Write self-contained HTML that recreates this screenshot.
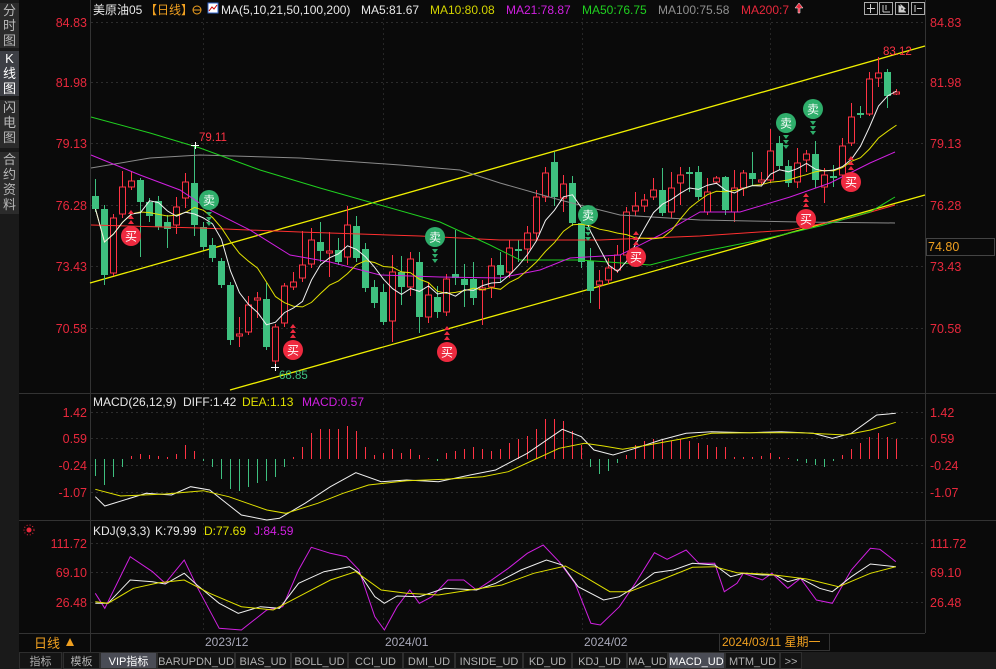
<!DOCTYPE html>
<html><head><meta charset="utf-8">
<style>
html,body{margin:0;padding:0;background:#0a0a0a;width:996px;height:669px;overflow:hidden;font-family:"Liberation Sans","Noto Sans CJK SC",sans-serif;}
#side{position:absolute;left:0;top:0;width:19px;height:669px;background:#1a1a1a;}
.sb{position:absolute;left:0;width:19px;background:#2b2b2b;color:#b8b8b8;font-size:13px;line-height:15px;text-align:center;}
.sb.on{background:#3d3f45;color:#fff;}
svg{position:absolute;left:0;top:0;}
</style></head><body>
<div id="side">
<div class="sb" style="top:3px;height:45px">分<br>时<br>图</div>
<div class="sb on" style="top:51px;height:45px">K<br>线<br>图</div>
<div class="sb" style="top:100px;height:48px">闪<br>电<br>图</div>
<div class="sb" style="top:152px;height:62px">合<br>约<br>资<br>料</div>
</div>
<svg id="s" width="996" height="669" xmlns="http://www.w3.org/2000/svg" font-family="Liberation Sans, Noto Sans CJK SC, sans-serif"></svg>
<script>
var S=document.getElementById('s'),h='';
function L(x1,y1,x2,y2,c,w,d){h+='<line x1="'+x1+'" y1="'+y1+'" x2="'+x2+'" y2="'+y2+'" stroke="'+c+'" stroke-width="'+(w||1)+'"'+(d?' stroke-dasharray="'+d+'"':'')+'/>';}
function T(x,y,t,c,s,a){h+='<text x="'+x+'" y="'+y+'" fill="'+c+'" font-size="'+(s||12)+'"'+(a?' text-anchor="'+a+'"':'')+'>'+t+'</text>';}
function P(pts,c,w){h+='<polyline fill="none" stroke="'+c+'" stroke-width="'+(w||1)+'" points="'+pts.map(function(p){return p[0]+','+p[1]}).join(' ')+'"/>';}
// frame
L(90.5,0,90.5,633,'#333');L(925.5,0,925.5,633,'#333');
L(19,393.5,996,393.5,'#333');L(19,520.5,996,520.5,'#333');
// grid
[22,82,143,205,266,328].forEach(function(y){L(91,y+.5,925,y+.5,'#2c2c2c',1,'2,3');});
[412,438,465,492,543,572,602].forEach(function(y){L(91,y+.5,925,y+.5,'#2c2c2c',1,'2,3');});
[203,383,582,770].forEach(function(x){L(x+.5,18,x+.5,633,'#262626',1,'2,3');});
// axis labels
var pl=[['84.83',22],['81.98',82],['79.13',143],['76.28',205],['73.43',266],['70.58',328]];
pl.forEach(function(p){T(87,p[1]+5,p[0],'#e8283c',12.5,'end');T(930,p[1]+5,p[0],'#e8283c',12.5);});
[['1.42',412],['0.59',438],['-0.24',465],['-1.07',492]].forEach(function(p){T(87,p[1]+5,p[0],'#e8283c',12.5,'end');T(930,p[1]+5,p[0],'#e8283c',12.5);});
[['111.72',543],['69.10',572],['26.48',602]].forEach(function(p){T(87,p[1]+5,p[0],'#e8283c',12.5,'end');T(930,p[1]+5,p[0],'#e8283c',12.5);});
h+='<rect x="926.5" y="238.5" width="68" height="17" fill="#0a0a0a" stroke="#444"/>';
T(928,251,'74.80','#f0a020',12.5);
// header
T(93,14,'美原油05','#e8e8e8',12);T(145,14,'【日线】','#f0a020',12);
h+='<circle cx="197" cy="10" r="4" fill="none" stroke="#f0a020"/>';L(193,10,201,10,'#f0a020');
h+='<rect x="208" y="3" width="10" height="10" fill="#fff" stroke="#36c"/>';P([[209,11],[212,7],[214,9],[217,5]],'#c00');
T(221,14,'MA(5,10,21,50,100,200)','#e8e8e8',12);T(361,14,'MA5:81.67','#e8e8e8',12);
T(430,14,'MA10:80.08','#d4d400',12);T(506,14,'MA21:78.87','#d020e0',12);T(582,14,'MA50:76.75','#20d020',12);
T(658,14,'MA100:75.58','#909090',12);T(741,14,'MA200:7','#e8283c',12);
h+='<path d="M799 3 L795 8 L798 8 L798 13 L800 13 L800 8 L803 8 Z" fill="#e8283c" stroke="#fff" stroke-width=".5"/>';
[864,879,895,911].forEach(function(x){h+='<rect x="'+(x+.5)+'" y="2.5" width="13" height="12" fill="none" stroke="#aaa"/>';});
L(867,8.5,875,8.5,'#ccc');L(870.5,4,870.5,13,'#ccc');
L(883,5,883,12,'#ccc');L(883,12,890,12,'#ccc');L(886,5,886,10,'#ccc');
h+='<path d="M899 5 L899 12 L906 12 M901 5 L905 8.5 L901 11Z" fill="#ccc" stroke="#ccc"/>';
L(915,5,915,12,'#ccc');L(917,8.5,922,8.5,'#ccc');
// channel lines
L(90,283,925,46,'#f0f000',1.3);L(230,390,925,195,'#f0f000',1.3);
// candles [top,bottom,color(1 red,0 green),high,low]
var C=[[196,209,0,179,212],[209,275,0,205,285],[218,273,1,214,276],[187,214,1,171,218],[181,187,1,172,190],[180,202,0,178,257],[202,216,0,198,222],[201,227,0,196,230],[222,229,0,215,248],[207,225,1,197,234],[182,198,1,173,208],[183,225,0,145,236],[227,247,0,222,250],[245,258,0,238,262],[261,285,0,258,288],[285,340,0,282,345],[334,336,1,317,347],[305,332,1,296,335],[298,300,1,292,318],[299,347,0,283,350],[327,361,1,324,367],[286,323,1,283,327],[282,287,1,272,290],[265,278,1,231,282],[240,264,1,228,268],[242,251,0,222,262],[251,253,1,232,277],[250,262,0,238,265],[225,257,1,206,265],[226,258,0,216,262],[249,288,0,243,292],[287,303,0,280,308],[292,322,0,284,325],[272,321,1,255,342],[272,287,0,256,305],[259,287,1,252,296],[262,317,0,252,333],[295,317,1,282,323],[297,312,0,286,318],[279,312,1,274,316],[274,278,0,230,285],[279,285,0,264,307],[279,298,0,262,305],[288,290,1,280,325],[266,287,1,258,298],[265,275,0,252,282],[248,272,1,240,278],
[249,251,0,240,262],[233,249,1,226,263],[197,233,1,190,240],[173,197,1,167,202],[162,197,0,152,206],[184,198,1,175,212],[183,223,0,176,226],[223,262,0,218,268],[261,291,0,248,303],[281,285,1,270,309],[268,280,1,258,284],[255,270,1,245,273],[212,255,1,207,258],[206,211,1,192,216],[200,206,1,194,212],[190,197,1,178,200],[190,213,0,168,216],[188,212,1,172,218],[175,183,1,167,205],[172,174,0,167,192],[172,197,0,166,200],[192,212,1,178,215],[178,182,1,176,184],[177,210,0,176,215],[188,212,1,170,222],[173,188,1,170,196],[173,179,0,152,186],[180,182,1,172,185],[151,180,1,129,183],[143,166,0,136,170],[166,183,0,160,187],[163,182,1,148,188],[154,160,1,150,172],[154,180,0,141,188],[175,187,1,168,203],[176,178,0,165,187],[146,175,1,138,178],[117,143,1,103,146],[113,115,0,106,118],[79,114,1,72,116],[73,78,1,57,87],[72,96,0,69,108],[92,94,1,89,95]];
var cl=[];
C.forEach(function(c,i){var x=95+9*i,col=c[2]?'#ff3344':'#3ec07f';
 L(x+.5,c[3],x+.5,c[4],col);
 var bh=Math.max(c[1]-c[0],1.5);
 if(c[2])h+='<rect x="'+(x-2.5)+'" y="'+c[0]+'" width="6" height="'+bh+'" fill="#0a0a0a" stroke="'+col+'"/>';
 else h+='<rect x="'+(x-3)+'" y="'+c[0]+'" width="7" height="'+bh+'" fill="'+col+'"/>';
 cl.push(c[2]?c[0]:c[1]);});
function ma(n){var r=[];for(var i=0;i<cl.length;i++){var a=Math.max(0,i-n+1),s=0;for(var j=a;j<=i;j++)s+=cl[j];r.push([95+9*i+.5,(s/(i-a+1)).toFixed(1)]);}return r;}
// MA lines
P([[91,225],[200,228],[300,232],[420,236],[500,240],[600,240],[700,236],[790,230],[850,218],[895,205]],'#ff3030');
P([[91,168],[150,158],[200,155],[300,158],[400,165],[460,170],[500,183],[560,200],[620,215],[700,220],[800,222],[895,223]],'#8a8a8a');
P([[91,117],[150,133],[200,148],[260,170],[320,188],[380,205],[440,222],[490,245],[520,260],[580,260],[650,265],[700,252],[760,240],[820,226],[870,212],[895,197]],'#20d020');
P([[91,155],[140,175],[180,190],[210,210],[250,230],[290,255],[330,262],[380,275],[440,277],[500,278],[540,270],[570,258],[620,255],[660,235],[700,212],[740,212],[790,197],[830,183],[870,163],[895,152]],'#d020e0');
P(ma(10),'#e0e000');P(ma(5),'#f0f0f0');
// annotations
T(199,141,'79.11','#ff3344',11.5);L(191,145.5,199,145.5,'#fff');L(195.5,142,195.5,149,'#fff');
T(279,379,'68.85','#3ec07f',11.5);L(271,367.5,279,367.5,'#fff');L(275.5,364,275.5,371,'#fff');
T(883,55,'83.12','#ff3344',11.5);
// signals
function sig(x,y,t,buy){var c=buy?'#ee2a3f':'#2fae6b';h+='<circle cx="'+x+'" cy="'+y+'" r="10" fill="'+c+'"/>';T(x,y+4.5,t,'#fff',12,'middle');
 for(var k=0;k<3;k++){var yy=buy?y-14-k*5:y+13+k*5;h+='<path d="M'+(x-3)+' '+(buy?yy+2:yy-1)+' L'+(x+3)+' '+(buy?yy+2:yy-1)+' L'+x+' '+(buy?yy-2:yy+3)+'Z" fill="'+c+'"/>';}}
sig(209,200,'卖',0);sig(435,237,'卖',0);sig(588,215,'卖',0);sig(786,123,'卖',0);sig(813,109,'卖',0);
sig(131,236,'买',1);sig(293,350,'买',1);sig(447,352,'买',1);sig(636,257,'买',1);sig(806,219,'买',1);sig(851,182,'买',1);
// MACD
T(93,406,'MACD(26,12,9)','#e8e8e8',12);T(183,406,'DIFF:1.42','#e8e8e8',12);T(242,406,'DEA:1.13','#e0e000',12);T(302,406,'MACD:0.57','#d020e0',12);
var H=[-17,-26,-18,-8,3,5,4,3,2,5,14,8,-2,-8,-20,-30,-32,-28,-24,-22,-18,-8,2,12,26,30,30,30,33,28,12,4,6,10,6,10,4,1,-2,6,8,10,12,10,8,10,16,20,23,30,40,40,38,28,14,-8,-15,-12,-4,4,14,18,20,20,18,20,18,16,14,12,12,2,2,2,3,6,2,1,-2,-4,-6,-8,-2,4,10,16,22,26,22,20];
H.forEach(function(v,i){var x=95+9*i+.5;L(x,459,x,459-v,v>0?'#ff3344':'#3ec07f');});
function cv(a){return a.map(function(p){return [(p[0]/1.574).toFixed(1),(390+p[1]/3).toFixed(1)];});}
P(cv([[150,320],[165,348],[230,310],[270,315],[300,290],[330,300],[360,345],[380,375],[420,390],[440,385],[480,340],[520,290],[560,248],[600,275],[640,270],[690,275],[740,255],[780,240],[830,190],[885,118],[915,140],[935,180],[965,195],[1000,175],[1040,150],[1080,130],[1120,125],[1180,128],[1230,125],[1280,130],[1310,145],[1340,130],[1380,75],[1410,70]]),'#f0f0f0');
P(cv([[150,298],[190,318],[260,312],[320,302],[360,320],[420,360],[450,370],[500,340],[540,310],[580,285],[640,272],[700,268],[760,260],[800,245],[840,210],[880,175],[920,160],[950,168],[980,178],[1020,165],[1070,148],[1120,130],[1180,128],[1260,128],[1330,135],[1370,120],[1410,97]]),'#e0e000');
// KDJ
h+='<circle cx="29" cy="530" r="2.5" fill="#e8283c"/><circle cx="29" cy="530" r="5" fill="none" stroke="#e8283c" stroke-dasharray="1,2"/>';
T(93,535,'KDJ(9,3,3)','#e8e8e8',12);T(155,535,'K:79.99','#e8e8e8',12);T(204,535,'D:77.69','#e0e000',12);T(254,535,'J:84.59','#d020e0',12);
h+='<clipPath id="kc"><rect x="91" y="521" width="834" height="112"/></clipPath><g clip-path="url(#kc)">';
P(cv([[150,610],[165,655],[205,500],[240,545],[260,580],[290,510],[310,590],[345,715],[380,720],[420,660],[445,650],[470,540],[490,472],[520,490],[545,500],[565,540],[590,680],[605,720],[625,650],[645,600],[660,640],[680,620],[705,570],[730,570],[750,600],[770,575],[800,535],[830,490],[855,465],[880,515],[905,580],[930,700],[945,705],[975,650],[1000,580],[1030,488],[1050,508],[1080,480],[1100,520],[1125,520],[1140,605],[1160,580],[1170,550],[1200,570],[1215,550],[1240,595],[1260,565],[1285,630],[1310,640],[1340,540],[1370,475],[1385,478],[1410,515]]),'#d020e0');
P(cv([[150,640],[170,640],[205,570],[240,575],[260,582],[290,550],[310,585],[345,640],[375,670],[410,650],[440,655],[470,580],[510,545],[550,530],[565,548],[590,620],[605,640],[625,618],[660,620],[700,595],[730,598],[750,600],[780,580],[820,540],[860,510],[885,525],[910,590],[950,630],[975,620],[1000,590],[1030,548],[1060,540],[1090,520],[1125,525],[1150,560],[1170,550],[1200,555],[1220,555],[1240,575],[1260,565],[1290,595],[1310,605],[1340,560],[1370,522],[1410,530]]),'#f0f0f0');
P(cv([[150,635],[170,640],[210,595],[250,578],[290,570],[330,610],[380,650],[430,660],[480,610],[520,570],[560,545],[600,600],[640,610],[690,615],[740,600],[790,585],[840,550],[890,528],[920,560],[960,605],[990,605],[1040,570],[1090,532],[1125,530],[1160,548],[1210,553],[1270,567],[1320,590],[1370,550],[1410,530]]),'#e0e000');
h+='</g>';
// date bar
h+='<rect x="19" y="633" width="977" height="19" fill="#0a0a0a"/>';L(19,633.5,925,633.5,'#333');L(90.5,633,90.5,652,'#333');
T(34,648,'日线','#f0a020',13);h+='<path d="M66 646 L70 638 L74 646Z" fill="#f0a020"/>';
T(205,646,'2023/12','#a8a8b8',12);T(385,646,'2024/01','#a8a8b8',12);T(584,646,'2024/02','#a8a8b8',12);
h+='<rect x="719.5" y="633.5" width="110" height="17" fill="none" stroke="#333"/>';T(722,646,'2024/03/11 星期一','#f0a020',12);
// tabs
h+='<rect x="19" y="652" width="977" height="17" fill="#1c1c1c"/>';
var tabs=[['指标',19,43],['模板',63,37],['VIP指标',100,57],['BARUPDN_UD',157,78],['BIAS_UD',235,56],['BOLL_UD',291,57],['CCI_UD',348,55],['DMI_UD',403,52],['INSIDE_UD',455,68],['KD_UD',523,49],['KDJ_UD',572,55],['MA_UD',627,41],['MACD_UD',668,57],['MTM_UD',725,55],['>>',780,22]];
tabs.forEach(function(t){var on=(t[0]=='VIP指标'||t[0]=='MACD_UD');h+='<rect x="'+t[1]+'.5" y="652.5" width="'+(t[2]-1)+'" height="16" fill="'+(on?'#4a4c55':'#141414')+'" stroke="#2e2e2e"/>';T(t[1]+t[2]/2,665,t[0],on?'#fff':'#b0b0b0',11,'middle');});
S.innerHTML=h;
</script>
</body></html>
